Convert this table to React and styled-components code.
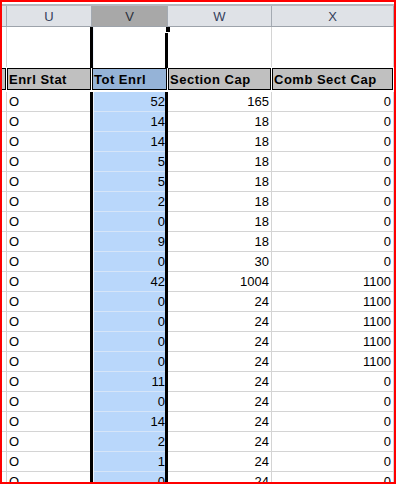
import React from 'react';
import styled, { createGlobalStyle, css } from 'styled-components';

const GlobalStyle = createGlobalStyle`
  html, body { margin: 0; padding: 0; background: #fff; }
  body { font-family: "Liberation Sans", Arial, sans-serif; }
  *, *::before, *::after { box-sizing: border-box; }
`;

// T (clipped), U, V, W, X — each track includes its right gridline
const COLS = '5px 85px 76px 104px 122px';

const Frame = styled.div`
  width: 396px;
  height: 484px;
  border: 2px solid #ff0000;
  overflow: hidden;
  background: #fff;
`;

const Sheet = styled.div`
  padding-top: 2px;
`;

const Row = styled.div`
  display: grid;
  grid-template-columns: ${COLS};
`;

const LetterRow = styled(Row)`
  height: 23px;
  border-top: 2px solid #b4b9c0;
  border-bottom: 1px solid #9da3ab;
`;

const LetterCell = styled.div`
  background: ${p => (p.$selected ? '#a8a8a8' : '#dfe2e7')};
  border-right: 1px solid #a4aab2;
  color: ${p => (p.$selected ? '#2a2f3a' : '#34405c')};
  font-size: 13px;
  line-height: 19px;
  padding-top: 1px;
  text-align: center;
`;

const TallRow = styled(Row)`
  height: 40px;
`;

// thick outline drawn over the gridlines on both sides of the selected column
const selectionEdges = css`
  position: relative;
  overflow: visible;
  &::before {
    content: '';
    position: absolute;
    top: 0;
    bottom: -1px;
    left: -2px;
    width: 3px;
    background: #000;
    box-shadow: 1px 0 0 #eef4fc;
    z-index: 1;
  }
  &::after {
    content: '';
    position: absolute;
    top: 0;
    bottom: -1px;
    right: -1px;
    width: 3px;
    background: #000;
    z-index: 1;
  }
`;

const BlankCell = styled.div`
  border-right: 1px solid #d4d4d4;
  ${p => p.$active && selectionEdges}
`;

const FillHandle = styled.span`
  position: absolute;
  top: 0;
  right: -4px;
  width: 6px;
  height: 6px;
  background: #000;
  border: 1px solid #fff;
  border-top: none;
  z-index: 2;
`;

const HeaderRow = styled(Row)`
  height: 25px;
`;

const HeaderCell = styled.div`
  margin: 1px 1px 2px 0;
  border: 1px solid #000;
  ${p => p.$clipped && css`border-left: none;`}
  background: ${p => (p.$selected ? '#95b3d7' : '#c0c0c0')};
  color: #000;
  font-size: 13px;
  font-weight: bold;
  letter-spacing: 0.5px;
  line-height: 19px;
  padding: 1px 0 0 1px;
  white-space: nowrap;
  overflow: hidden;
`;

const DataRow = styled(Row)`
  height: 20px;
`;

const DataCell = styled.div`
  border-right: 1px solid ${p => (p.$selected ? '#d6e5f8' : '#d4d4d4')};
  border-bottom: 1px solid ${p => (p.$selected ? '#d6e5f8' : '#d4d4d4')};
  background: ${p => (p.$selected ? '#b9d7fb' : 'transparent')};
  color: #000;
  font-size: 13px;
  line-height: 18px;
  padding: 1px 2px 0 2px;
  text-align: ${p => (p.$num ? 'right' : 'left')};
  white-space: nowrap;
  overflow: hidden;
  ${p => p.$selected && selectionEdges}
`;

const rows = [
  [52, 165, 0],
  [14, 18, 0],
  [14, 18, 0],
  [5, 18, 0],
  [5, 18, 0],
  [2, 18, 0],
  [0, 18, 0],
  [9, 18, 0],
  [0, 30, 0],
  [42, 1004, 1100],
  [0, 24, 1100],
  [0, 24, 1100],
  [0, 24, 1100],
  [0, 24, 1100],
  [11, 24, 0],
  [0, 24, 0],
  [14, 24, 0],
  [2, 24, 0],
  [1, 24, 0],
  [0, 24, 0],
];

export default function App() {
  return (
    <>
      <GlobalStyle />
      <Frame>
        <Sheet>
          <LetterRow>
            <LetterCell />
            <LetterCell>U</LetterCell>
            <LetterCell $selected>V</LetterCell>
            <LetterCell>W</LetterCell>
            <LetterCell>X</LetterCell>
          </LetterRow>

          <TallRow>
            <BlankCell />
            <BlankCell />
            <BlankCell $active>
              <FillHandle />
            </BlankCell>
            <BlankCell />
            <BlankCell />
          </TallRow>

          <HeaderRow>
            <HeaderCell $clipped />
            <HeaderCell>Enrl Stat</HeaderCell>
            <HeaderCell $selected>Tot Enrl</HeaderCell>
            <HeaderCell>Section Cap</HeaderCell>
            <HeaderCell>Comb Sect Cap</HeaderCell>
          </HeaderRow>

          {rows.map(([tot, cap, comb], i) => (
            <DataRow key={i}>
              <DataCell />
              <DataCell>O</DataCell>
              <DataCell $num $selected>{tot}</DataCell>
              <DataCell $num>{cap}</DataCell>
              <DataCell $num>{comb}</DataCell>
            </DataRow>
          ))}
        </Sheet>
      </Frame>
    </>
  );
}
